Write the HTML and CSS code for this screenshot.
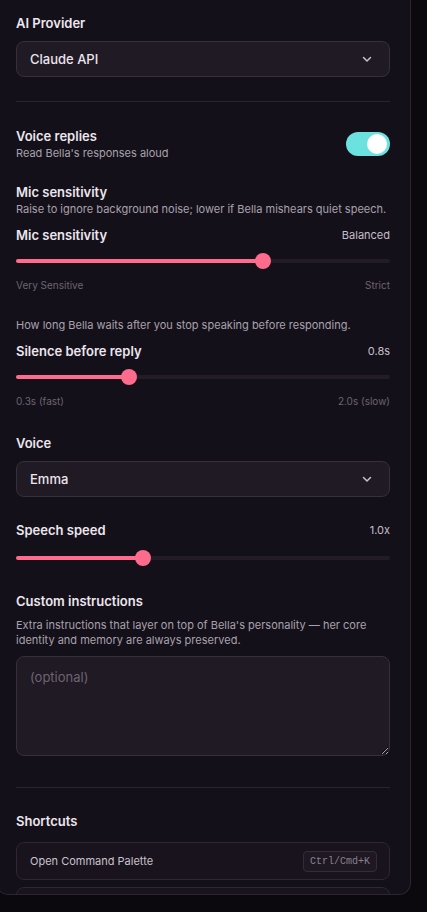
FILE: index.html
```html
<!DOCTYPE html>
<html lang="en">
<head>
    <meta charset="UTF-8">
    <meta name="viewport" content="width=device-width, initial-scale=1.0">
    <title>Settings</title>
    <link rel="stylesheet" href="styles.css">
</head>
<body>
    <div class="panel">
        <!-- Fournisseur IA -->
        <div class="field-label">AI Provider</div>
        <div class="select">
            <span>Claude API</span>
            <svg class="chevron" width="12" height="12" viewBox="0 0 12 12"><path d="M2.5 4.5 6 8l3.5-3.5" fill="none" stroke="currentColor" stroke-width="1.5" stroke-linecap="round" stroke-linejoin="round"/></svg>
        </div>

        <hr class="divider">

        <div class="toggle-row">
            <div>
                <div class="title">Voice replies</div>
                <div class="desc">Read Bella's responses aloud</div>
            </div>
            <div class="toggle on"><span class="knob"></span></div>
        </div>

        <div class="title mic-title">Mic sensitivity</div>
        <div class="desc">Raise to ignore background noise; lower if Bella mishears quiet speech.</div>
        <div class="slider-head">
            <span class="title">Mic sensitivity</span>
            <span class="value">Balanced</span>
        </div>
        <div class="slider" style="--v: 0.667">
            <div class="fill"></div>
            <div class="thumb"></div>
        </div>
        <div class="ticks">
            <span>Very Sensitive</span>
            <span>Strict</span>
        </div>

        <div class="desc silence-desc">How long Bella waits after you stop speaking before responding.</div>
        <div class="slider-head">
            <span class="title">Silence before reply</span>
            <span class="value">0.8s</span>
        </div>
        <div class="slider" style="--v: 0.294">
            <div class="fill"></div>
            <div class="thumb"></div>
        </div>
        <div class="ticks">
            <span>0.3s (fast)</span>
            <span>2.0s (slow)</span>
        </div>

        <div class="field-label voice-label">Voice</div>
        <div class="select">
            <span>Emma</span>
            <svg class="chevron" width="12" height="12" viewBox="0 0 12 12"><path d="M2.5 4.5 6 8l3.5-3.5" fill="none" stroke="currentColor" stroke-width="1.5" stroke-linecap="round" stroke-linejoin="round"/></svg>
        </div>

        <div class="slider-head speed-head">
            <span class="title">Speech speed</span>
            <span class="value">1.0x</span>
        </div>
        <div class="slider speed-slider" style="--v: 0.333">
            <div class="fill"></div>
            <div class="thumb"></div>
        </div>

        <div class="title custom-title">Custom instructions</div>
        <div class="desc custom-desc">Extra instructions that layer on top of Bella's personality — her core identity and memory are always preserved.</div>
        <textarea class="instructions" placeholder="(optional)"></textarea>

        <hr class="divider bottom-divider">

        <div class="title shortcuts-title">Shortcuts</div>
        <div class="shortcut">
            <span>Open Command Palette</span>
            <kbd>Ctrl/Cmd+K</kbd>
        </div>
        <!-- ligne suivante, coupée par le bas du panneau -->
        <div class="shortcut"></div>
    </div>
</body>
</html>
```

FILE: styles.css
```css
body {
    margin: 0;
    background-color: #0b090d;
    font-family: Inter, "Noto Sans", sans-serif;
    color: #ece6ee;
    overflow: hidden;
}
.panel {
    box-sizing: border-box;
    margin-left: -4px;
    width: 415px;
    height: 895px;
    padding: 13px 20px 0 19px;
    background-color: #141019;
    border: 1px solid #2b2530;
    border-top: none;
    border-radius: 0 0 12px 12px;
    overflow: hidden;
}
.field-label {
    font-size: 13px;
    font-weight: 600;
    line-height: 20px;
    margin-bottom: 8px;
}
.select {
    box-sizing: border-box;
    height: 36px;
    display: flex;
    align-items: center;
    justify-content: space-between;
    padding: 0 16px 0 13px;
    background-color: #201a25;
    border: 1px solid #372f3c;
    border-radius: 8px;
    font-size: 13px;
    font-weight: 500;
    color: #ebe5ed;
}
.chevron {
    color: #c9c1cd;
}
.divider {
    border: none;
    border-top: 1px solid #2b2530;
    margin: 24px 0 0;
}
.title {
    font-size: 13px;
    font-weight: 600;
    line-height: 18px;
}
.desc {
    font-size: 11px;
    line-height: 16px;
    color: #a9a1ad;
}
.toggle-row {
    display: flex;
    align-items: center;
    justify-content: space-between;
    margin-top: 25px;
}
.toggle {
    width: 44px;
    height: 24px;
    border-radius: 12px;
    background-color: #6be2df;
    position: relative;
    flex-shrink: 0;
}
.knob {
    position: absolute;
    top: 2px;
    right: 3px;
    width: 20px;
    height: 20px;
    border-radius: 50%;
    background-color: #fff;
}
.mic-title {
    margin-top: 22px;
}
.slider-head {
    display: flex;
    justify-content: space-between;
    align-items: center;
    margin-top: 9px;
}
.value {
    font-size: 11px;
    color: #c6bec9;
}
.slider {
    position: relative;
    height: 16px;
    margin-top: 9px;
}
.slider::before {
    content: "";
    position: absolute;
    left: 0;
    right: 0;
    top: 6px;
    height: 4px;
    border-radius: 2px;
    background-color: #231c27;
}
.fill {
    position: absolute;
    left: 0;
    top: 6px;
    height: 4px;
    border-radius: 2px;
    width: calc(var(--v) * (100% - 16px) + 8px);
    background-color: #ff6b8c;
}
.thumb {
    position: absolute;
    top: 0;
    left: calc(var(--v) * (100% - 16px));
    width: 16px;
    height: 16px;
    border-radius: 50%;
    background-color: #ff6b8c;
}
.ticks {
    display: flex;
    justify-content: space-between;
    margin-top: 9px;
    font-size: 10px;
    line-height: 14px;
    color: #6c6470;
}
.silence-desc {
    margin-top: 25px;
}
.voice-label {
    margin-top: 25px;
}
.speed-head {
    margin-top: 24px;
}
.speed-slider {
    margin-top: 11px;
}
.custom-title {
    margin-top: 26px;
}
.custom-desc {
    margin-top: 8px;
    line-height: 15px;
}
.instructions {
    display: block;
    box-sizing: border-box;
    width: 100%;
    height: 100px;
    margin-top: 8px;
    padding: 12px 13px;
    background-color: #201a25;
    border: 1px solid #372f3c;
    border-radius: 8px;
    font-family: Inter, "Noto Sans", sans-serif;
    font-size: 13px;
    color: #ebe5ed;
    outline: none;
}
.instructions::placeholder {
    color: #6d6471;
}
.bottom-divider {
    margin-top: 31px;
}
.shortcuts-title {
    margin-top: 24px;
}
.shortcut {
    box-sizing: border-box;
    height: 38px;
    display: flex;
    align-items: center;
    justify-content: space-between;
    padding: 0 12px 0 13px;
    margin-top: 12px;
    border: 1px solid #2e2833;
    border-radius: 8px;
    background-color: #18131c;
    font-size: 11px;
    color: #c9c2cc;
}
.shortcut + .shortcut {
    margin-top: 7px;
}
kbd {
    font-family: "Liberation Mono", monospace;
    font-size: 10px;
    line-height: 19px;
    padding: 0 6px;
    color: #8a828e;
    background-color: #1e1823;
    border: 1px solid #342d39;
    border-radius: 4px;
}
```
